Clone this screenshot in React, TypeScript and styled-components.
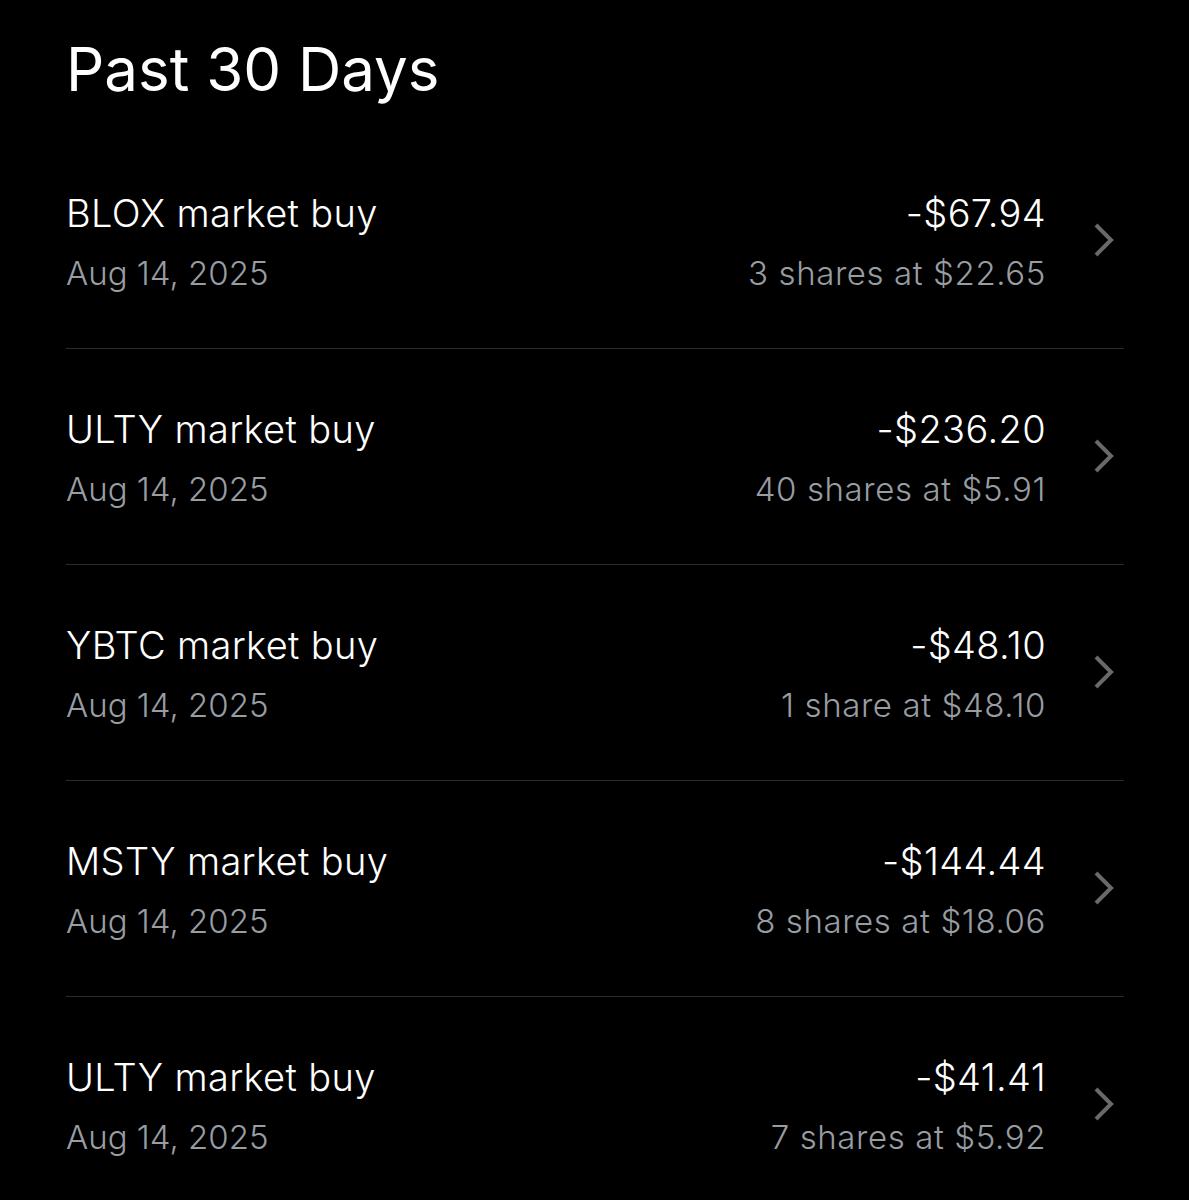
import styled, { createGlobalStyle } from "styled-components";

const GlobalStyle = createGlobalStyle`
  html, body {
    margin: 0;
    padding: 0;
    background: #000;
  }
  body {
    font-family: Inter, "Noto Sans", "Liberation Sans", sans-serif;
    color: #fff;
  }
`;

const Page = styled.div`
  padding: 33px 65px 0 66px;
  min-height: 1200px;
  box-sizing: border-box;
  background: #000;
`;

const Title = styled.h1`
  margin: 0 0 28px;
  font-size: 60px;
  line-height: 72px;
  font-weight: 400;
  color: #fff;
`;

const Row = styled.div`
  display: flex;
  align-items: center;
  padding: 58px 0 55px;
  border-bottom: 1px solid #2b2b2b;
`;

const Info = styled.div`
  flex: 1;
  display: flex;
  flex-direction: column;
`;

const Amounts = styled.div`
  display: flex;
  flex-direction: column;
  align-items: flex-end;
`;

const MainLine = styled.div`
  font-size: 38px;
  line-height: 44px;
  font-weight: 350;
  letter-spacing: 0.35px;
  color: #fff;
`;

const SubLine = styled.div<{ $wide?: boolean }>`
  margin-top: 18px;
  font-size: 33px;
  line-height: 40px;
  font-weight: 350;
  letter-spacing: ${(p) => (p.$wide ? "0.6px" : "0")};
  color: #979da3;
`;

const Chevron = styled.div`
  display: flex;
  width: 20px;
  margin: 0 10px 4px 48px;
`;

interface Trade {
  symbol: string;
  date: string;
  total: string;
  detail: string;
}

const trades: Trade[] = [
  { symbol: "BLOX", date: "Aug 14, 2025", total: "-$67.94", detail: "3 shares at $22.65" },
  { symbol: "ULTY", date: "Aug 14, 2025", total: "-$236.20", detail: "40 shares at $5.91" },
  { symbol: "YBTC", date: "Aug 14, 2025", total: "-$48.10", detail: "1 share at $48.10" },
  { symbol: "MSTY", date: "Aug 14, 2025", total: "-$144.44", detail: "8 shares at $18.06" },
  { symbol: "ULTY", date: "Aug 14, 2025", total: "-$41.41", detail: "7 shares at $5.92" },
];

function TradeRow({ symbol, date, total, detail }: Trade) {
  return (
    <Row>
      <Info>
        <MainLine>{symbol} market buy</MainLine>
        <SubLine>{date}</SubLine>
      </Info>
      <Amounts>
        <MainLine>{total}</MainLine>
        <SubLine $wide>{detail}</SubLine>
      </Amounts>
      <Chevron>
        <svg width="20" height="34" viewBox="0 0 20 34">
          <polyline points="2,2 17,17 2,32" fill="none" stroke="#67696b" strokeWidth="4" />
        </svg>
      </Chevron>
    </Row>
  );
}

export default function App() {
  return (
    <Page>
      <GlobalStyle />
      <Title>Past 30 Days</Title>
      {trades.map((t, i) => (
        <TradeRow key={i} {...t} />
      ))}
    </Page>
  );
}
